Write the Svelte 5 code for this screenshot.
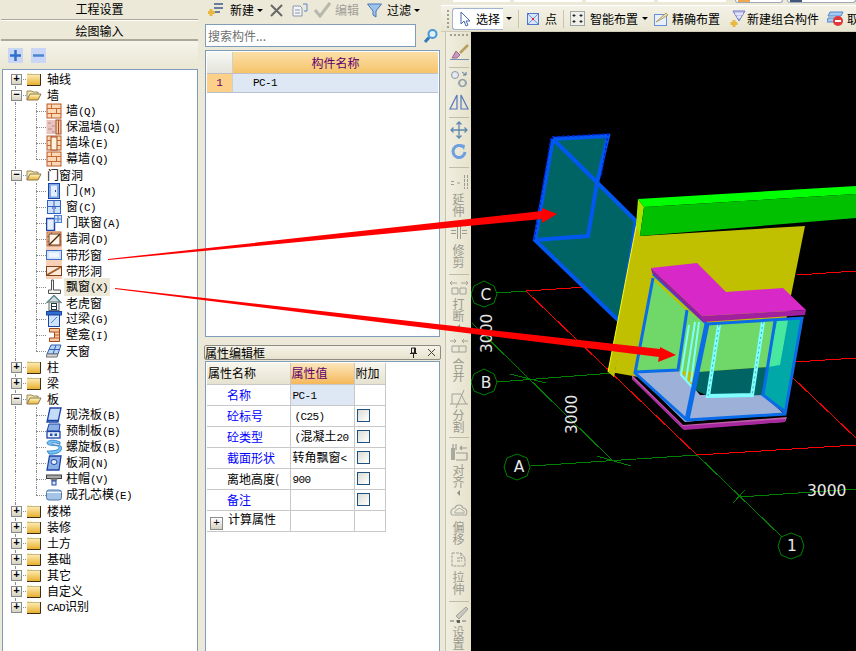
<script>
	const tree = [
		{ n: '轴线' },
		{ n: '墙', kids: [['墙(Q)', 'wall'], ['保温墙(Q)', 'insul'], ['墙垛(E)', 'pier'], ['幕墙(Q)', 'wall']] },
		{
			n: '门窗洞',
			kids: [
				['门(M)', 'door'], ['窗(C)', 'win'], ['门联窗(A)', 'doorwin'], ['墙洞(D)', 'hole'],
				['带形窗', 'band'], ['带形洞', 'bandhole'], ['飘窗(X)', 'bay'], ['老虎窗', 'dormer'],
				['过梁(G)', 'lintel'], ['壁龛(I)', 'niche'], ['天窗', 'sky']
			]
		},
		{ n: '柱' },
		{ n: '梁' },
		{
			n: '板',
			kids: [
				['现浇板(B)', 'slab'], ['预制板(B)', 'precast'], ['螺旋板(B)', 'spiral'],
				['板洞(N)', 'slabhole'], ['柱帽(V)', 'cap'], ['成孔芯模(E)', 'core']
			]
		},
		{ n: '楼梯' }, { n: '装修' }, { n: '土方' }, { n: '基础' }, { n: '其它' }, { n: '自定义' }, { n: 'CAD识别' }
	];

	const rows = [
		{ name: '名称', val: 'PC-1', blue: true, sel: true },
		{ name: '砼标号', val: '(C25)', blue: true, check: true, pad: true },
		{ name: '砼类型', val: '(混凝土20', blue: true, check: true, pad: true },
		{ name: '截面形状', val: '转角飘窗<', blue: true, check: true },
		{ name: '离地高度(', val: '900', check: true },
		{ name: '备注', val: '', blue: true, check: true }
	];

	const tools = [
		{ icon: 'brush', h: 28, pt: 4, sep: true },
		{ icon: 'circles', h: 23 },
		{ icon: 'mirror', h: 24, sep: true },
		{ icon: 'move', h: 23, pt: 1 },
		{ icon: 'rotate', h: 24, sep: true },
		{ icon: 'extend', t: '延伸', h: 55, pt: 3, mt: 1 },
		{ icon: 'trim', t: '修剪', h: 49, mt: 0, sep: true },
		{ icon: 'break', t: '打断', h: 59, pt: 1, mt: 1, more: true },
		{ icon: 'merge', t: '合并', h: 54, mt: 3 },
		{ icon: 'split', t: '分割', h: 47, mt: 0, sep: true },
		{ icon: 'align', t: '对齐', h: 61, pt: 3, mt: 2, more: true },
		{ icon: 'offset', t: '偏移', h: 50, mt: 1 },
		{ icon: 'stretch', t: '拉伸', h: 50, mt: 1, sep: true },
		{ icon: 'setup', t: '设置', h: 50, pt: 2, mt: 1 }
	];

	const parts = (s) => s.split(/([\x00-\x7f]+)/).filter(Boolean);
</script>

{#snippet label(text)}
	{#each parts(text) as p}
		{#if /^[\x00-\x7f]/.test(p)}<span class="lat">{p}</span>{:else}{p}{/if}
	{/each}
{/snippet}

{#snippet folder(open)}
	<svg class="ico" width="16" height="14" viewBox="0 0 16 14">
		<defs>
			<linearGradient id="fold" x1="0" y1="0" x2="0" y2="1">
				<stop offset="0" stop-color="#fff6c8" /><stop offset="1" stop-color="#e8b030" />
			</linearGradient>
		</defs>
		{#if open}
			<path d="M1 3h5l1 1h5v3H4L1 12z" fill="#f4e4a8" stroke="#9a8a60" />
			<path d="M1 12l3-6h11l-3 6z" fill="url(#fold)" stroke="#8a7a50" />
		{:else}
			<path d="M1 2l1-1h4l1 1h7v11H1z" fill="url(#fold)" />
			<path d="M14.500 2v11.500H1" fill="none" stroke="#3a3018" />
			<path d="M1 2.500h13" stroke="#c8b880" />
		{/if}
	</svg>
{/snippet}

{#snippet brick()}
	<rect x="1" y="1" width="14" height="14" fill="#fbd9b8" stroke="#b85a28" />
	<path d="M1 5.500h14M1 10.500h14M5.500 1v4.500M10.500 5.500v5M5.500 10.500v4.500" stroke="#c86a30" fill="none" />
{/snippet}

{#snippet treeIcon(kind)}
	<svg class="ico" width="16" height="16" viewBox="0 0 16 16">
		{#if kind === 'wall'}
			{@render brick()}
		{:else if kind === 'insul'}
			<rect x="0.500" y="1" width="10" height="14" fill="#e8c4c0" />
			<path d="M2 4h3M6 7h3M2 10h4M6 13h3" stroke="#c08880" />
			<rect x="10" y="1" width="5" height="14" fill="#f4c8a0" stroke="#a85028" />
			<path d="M12.500 1v14" stroke="#a85028" />
		{:else if kind === 'pier'}
			{@render brick()}
			<rect x="5" y="2" width="6" height="13" fill="#fff0dc" stroke="#a04818" />
		{:else if kind === 'door'}
			<rect x="2.500" y="0.500" width="11" height="15" fill="#7fa8e4" stroke="#1c44a8" />
			<rect x="5" y="2.500" width="6" height="11" fill="#e4eefc" />
			<rect x="9" y="7" width="1" height="2" fill="#1c44a8" />
		{:else if kind === 'win'}
			<rect x="1.500" y="1.500" width="13" height="13" fill="#cfe2fa" stroke="#3060c0" />
			<path d="M8 1.500v13M1.500 7.500h13" stroke="#3060c0" />
			<path d="M6 9h1M9 9h1" stroke="#103080" />
		{:else if kind === 'doorwin'}
			<rect x="0.500" y="3.500" width="8" height="12" fill="#e4eefc" stroke="#1c44a8" stroke-width="1.500" />
			<rect x="8.500" y="0.500" width="7" height="7" fill="#cfe2fa" stroke="#5080d0" />
			<path d="M12 0.500v7M8.500 4h7" stroke="#5080d0" />
		{:else if kind === 'hole'}
			{@render brick()}
			<rect x="3" y="3" width="11" height="11" fill="#fff4e8" stroke="#703818" />
			<path d="M3 14L14 3" stroke="#502810" stroke-width="1.500" />
		{:else if kind === 'band'}
			<rect x="0" y="0" width="16" height="16" fill="#f8d0b8" />
			<rect x="0.500" y="3.500" width="15" height="9" fill="#cfe0f8" stroke="#4070c8" />
			<rect x="3" y="5.500" width="10" height="5" fill="#f0f6ff" />
		{:else if kind === 'bandhole'}
			<rect x="0" y="0" width="16" height="16" fill="#f8d0b8" />
			<rect x="0.500" y="3.500" width="15" height="9" fill="#fbe8d8" stroke="#804018" />
			<path d="M1 12L15 4" stroke="#a06030" stroke-width="2" />
		{:else if kind === 'bay'}
			<path d="M5.500 1v10H2.500v3.500h12V11H7.500V1z" fill="#f4f4f0" stroke="#505050" />
		{:else if kind === 'dormer'}
			<path d="M0.500 8L8 0.500 15.500 8" fill="#cfe0e8" stroke="#608890" stroke-width="1.500" />
			<rect x="3" y="7" width="10" height="8.500" fill="#f4f4e8" stroke="#606860" />
			<rect x="5.500" y="8.500" width="5" height="6" fill="#fff" stroke="#203850" />
			<path d="M5.500 11.500h5" stroke="#203850" />
		{:else if kind === 'lintel'}
			<rect x="0.500" y="0.500" width="15" height="3.500" fill="#3070d0" stroke="#1c44a8" />
			<rect x="2.500" y="4" width="11" height="11.500" fill="#cfe4fa" stroke="#1c44a8" />
			<path d="M5 12L11 6" stroke="#5080c0" />
		{:else if kind === 'niche'}
			<path d="M3.500 1.500h10v13h-10v-3.500h5v-6h-5z" fill="#f4c8a0" stroke="#a04818" />
			<path d="M9 5h4M9 8h4M9 11h4" stroke="#b86030" />
		{:else if kind === 'sky'}
			<path d="M5 2h10l-3 9H1z" fill="#bcd4f4" stroke="#3060b0" />
			<path d="M10 2L7 11M3 6.500h11" stroke="#3060b0" />
			<path d="M1 11h11l-1 3H0z" fill="#d8d8d8" stroke="#707070" />
		{:else if kind === 'slab'}
			<path d="M4 1h11l-3 14H1z" fill="#c4dcf8" stroke="#1c44a8" stroke-width="1.300" />
			<path d="M1 13.500h11" stroke="#1c44a8" stroke-width="1.500" />
		{:else if kind === 'precast'}
			<path d="M3 1h11l-1 7H1z" fill="#8cb0e4" stroke="#1c44a8" />
			<rect x="1" y="8.500" width="13" height="6.500" fill="#e8f0fc" stroke="#1c44a8" stroke-width="1.300" />
			<rect x="4" y="10.500" width="2.500" height="2.500" fill="#2050b0" />
			<rect x="8.500" y="10.500" width="2.500" height="2.500" fill="#2050b0" />
		{:else if kind === 'spiral'}
			<path d="M14 3C8 0 1 1 1 4c0 4 12 1 12 4.500S4 12 1 12l2 3c6 1 13-2 13-6 0-4-10-2-10-4.500 0-1 5-1 8 1z" fill="#70c0f0" stroke="#2878c8" stroke-width="0.800" />
		{:else if kind === 'slabhole'}
			<path d="M3.500 1h11.500l-2 14H1z" fill="#8cb0e4" stroke="#1c44a8" stroke-width="1.300" />
			<ellipse cx="8" cy="7" rx="3" ry="2.500" fill="#e8f0fc" stroke="#1c44a8" />
		{:else if kind === 'cap'}
			<rect x="0.500" y="4" width="15" height="3.500" fill="#a8a8a8" stroke="#404040" />
			<path d="M4 7.500h8L10.500 10h-5z" fill="#808080" />
			<rect x="6" y="10" width="4" height="4" fill="#dce8f8" stroke="#1c44a8" />
		{:else if kind === 'core'}
			<rect x="0.500" y="3" width="15" height="10" rx="2.500" fill="#a4c4e8" stroke="#5078a8" />
			<path d="M1 5.500h14" stroke="#f0f6ff" />
		{/if}
	</svg>
{/snippet}

{#snippet toolIcon(kind)}
	<svg class="ico" width="22" height="20" viewBox="0 0 22 20" fill="none" stroke="#9a9c94">
		{#if kind === 'brush'}
			<path d="M12 11L20 3" stroke="#b8a060" stroke-width="2.500" />
			<path d="M8 9l4 4-3 3H4z" fill="#c898c0" stroke="#a06890" />
			<path d="M2 17.500h19" stroke="#7890b0" />
		{:else if kind === 'circles'}
			<circle cx="7" cy="6" r="3.500" stroke="#8898a8" fill="#e8e8f0" />
			<circle cx="15" cy="14" r="3.500" stroke="#8898a8" />
			<circle cx="14" cy="14" r="3.500" stroke="#8898a8" />
			<path d="M14 3l4 3M18 3v3h-3" stroke="#5878a0" />
		{:else if kind === 'mirror'}
			<path d="M9 3L2 17h7zM13 3l7 14h-7z" stroke="#5878b8" stroke-width="1.200" />
		{:else if kind === 'move'}
			<path d="M11 2v16M3 10h16M8.500 4.500L11 2l2.500 2.500M8.500 15.500L11 18l2.500-2.500M5.500 7.500L3 10l2.500 2.500M16.500 7.500L19 10l-2.500 2.500" stroke="#6088b0" stroke-width="1.300" />
		{:else if kind === 'rotate'}
			<path d="M15 5a6 6 0 1 0 2 5" stroke="#6ca0e0" stroke-width="3" />
			<path d="M12 2l5 1-1 5z" fill="#6ca0e0" stroke="none" />
		{:else if kind === 'extend'}
			<path d="M3 9.500h4M3 12.500h4M9 11h4M16.500 3v14M19.500 3v14" stroke-dasharray="3 1" />
		{:else if kind === 'trim'}
			<path d="M3 6.500h5M14 6.500h5M3 9.500h5M14 9.500h5M9.500 1v14M12.500 1v14" />
		{:else if kind === 'break'}
			<path d="M2 6h7M13 6h7M4 4L2 6l2 2M18 4l2 2-2 2M4 11h6v6H4zM12 11h6v6h-6z" stroke="#a0a298" />
		{:else if kind === 'merge'}
			<path d="M2 6h6M14 6h6M6 4l2 2-2 2M16 4l-2 2 2 2M4 11h14v6H4zM11 11v6" stroke="#a0a298" />
		{:else if kind === 'split'}
			<path d="M2 15h18M4 5h9L18 15M16 1L8 19M4 5v10" stroke="#a0a298" />
		{:else if kind === 'align'}
			<path d="M5 2v16M8 8V2M8 18h11M12 6h7M12 6l2-2M12 6l2 2M8 11h11v7" stroke-width="1.200" />
			<rect x="3" y="6" width="4" height="12" fill="#a8aaa0" stroke="none" />
		{:else if kind === 'offset'}
			<path d="M4 15c-3-4 1-7 3-7 1-4 7-4 8 0 3 0 5 3 3 7z" stroke="#a8aaa0" stroke-width="1.200" />
			<path d="M7 13c-1-2 1-3 2-3 1-2 4-2 5 0 1 0 3 1 2 3z" stroke="#a8aaa0" />
		{:else if kind === 'stretch'}
			<path d="M4 3h9l4 5v8H4zM13 3v5h4M9 8h5M9 11h5" stroke-dasharray="3 1" />
		{:else if kind === 'setup'}
			<path d="M8 11L18 2l2 2-9 10z" fill="#c8c8c0" stroke="#a0a298" />
			<path d="M2 16h18" stroke="#70706c" stroke-dasharray="4 2" />
			<rect x="9" y="15" width="3" height="3" fill="#606060" stroke="none" />
		{/if}
	</svg>
{/snippet}

<div class="app">
	<aside class="left">
		<div class="tab">工程设置</div>
		<div class="tab second">绘图输入</div>
		<div class="treebar">
			<svg width="15" height="15" viewBox="0 0 15 15"><rect width="15" height="15" fill="#c9d6f6" /><path d="M2 7.500h11M7.500 2v11" stroke="#2f70c8" stroke-width="2.500" /></svg>
			<svg width="15" height="15" viewBox="0 0 15 15"><rect width="15" height="15" fill="#c9d6f6" /><path d="M2 7.500h11" stroke="#4a86cc" stroke-width="2.500" /></svg>
		</div>
		<div class="tree">
			{#each tree as g, i}
				<div class="row">
					<span class="vl" class:first={i === 0} class:last={i === tree.length - 1}></span>
					<span class="hl"></span>
					<span class="box">{g.kids ? '−' : '+'}</span>
					{@render folder(!!g.kids)}
					<span class="txt">{@render label(g.n)}</span>
				</div>
				{#if g.kids}
					{#each g.kids as k, j}
						<div class="row child">
							<span class="vl"></span>
							<span class="vl2" class:last={j === g.kids.length - 1}></span>
							<span class="hl2"></span>
							{@render treeIcon(k[1])}
							<span class="txt" class:picked={k[1] === 'bay'}>{@render label(k[0])}</span>
						</div>
					{/each}
				{/if}
			{/each}
		</div>
	</aside>

	<section class="mid">
		<div class="bar">
			<svg class="ico" width="16" height="16" viewBox="0 0 16 16"><path d="M6 2h9M6 6h9M6 10h6" stroke="#3c5c90" stroke-width="1.300" /><path d="M3 7v7M0 10.500h7" stroke="#e8b840" stroke-width="3" /></svg>
			<span class="m6">新建</span><i class="caret"></i>
			<svg class="m6 ico" width="15" height="15" viewBox="0 0 15 15"><path d="M2 2l11 11M13 2L2 13" stroke="#686868" stroke-width="2" /></svg>
			<svg class="m8 ico" width="16" height="16" viewBox="0 0 16 16" fill="none"><path d="M1 4h7l2 2v8H1z" fill="#f4f4f4" stroke="#8898b0" /><path d="M3 8h5M3 11h5" stroke="#8898b0" /><path d="M11 2h4v7h-3" stroke="#5888c8" /></svg>
			<svg class="m6 ico" width="17" height="16" viewBox="0 0 17 16" fill="none"><path d="M1 8l5 6L16 1" stroke="#b8b8ac" stroke-width="3" /></svg>
			<span class="off">编辑</span>
			<svg class="m8 ico" width="15" height="15" viewBox="0 0 15 15"><path d="M0.500 1h14L9 8v6l-3-2V8z" fill="#9cc4ec" stroke="#4878b8" /></svg>
			<span class="m5">过滤</span><i class="caret"></i>
		</div>
		<div class="search">
			<div class="input">搜索构件...</div>
			<svg class="ico" width="16" height="16" viewBox="0 0 16 16" fill="none"><circle cx="9.500" cy="6" r="4" fill="#dff0fc" stroke="#4898d8" stroke-width="2" /><path d="M6 9.500L2 14" stroke="#3078b8" stroke-width="3" /></svg>
		</div>
		<div class="list">
			<div class="lhead"><span class="corner"></span><span class="lname">构件名称</span></div>
			<div class="lrow"><span class="num">1</span><span class="cell">PC-1</span></div>
		</div>
		<div class="ptitle">
			<span class="ptext">属性编辑框</span>
			<svg width="9" height="11" viewBox="0 0 9 11"><path d="M2.500 1h4v5h-4zM1 6.500h7M4.500 7v4M5.500 1v5" stroke="#202020" fill="none" /></svg>
			<svg width="9" height="9" viewBox="0 0 9 9"><path d="M1 1l7 7M8 1L1 8" stroke="#404040" /></svg>
		</div>
		<div class="props">
			<table>
				<thead>
					<tr><th class="hname">属性名称</th><th class="hval">属性值</th><th class="hadd">附加</th></tr>
				</thead>
				<tbody>
					{#each rows as r}
						<tr>
							<td class="name" class:blue={r.blue}>{r.name}</td>
							<td class="val" class:sel={r.sel} class:pad={r.pad}>{@render label(r.val)}</td>
							<td class="add">{#if r.check}<span class="chk"></span>{/if}</td>
						</tr>
					{/each}
					<tr>
						<td class="calc"><span class="box big">+</span>计算属性</td><td></td><td></td>
					</tr>
				</tbody>
			</table>
		</div>
	</section>

	<section class="main">
		<div class="strip">
			<span class="blk b1"></span><span class="blk"></span><span class="blk"></span><span class="blk"></span>
			<span class="ftab f1"><i></i></span>
			<span class="ftab f2"><i></i></span>
		</div>
		<div class="tools">
			<span class="grip"></span>
			<div class="select">
				<svg class="ico" width="12" height="16" viewBox="0 0 12 16"><path d="M2 1v12l3-3 2 5 2-1-2-4h4z" fill="#fff" stroke="#4868a8" /></svg>
				<span>选择</span>
			</div>
			<i class="caret k1"></i><b class="tsep"></b>
			<svg class="ico" width="12" height="12" viewBox="0 0 12 12" fill="none"><rect x="0.500" y="0.500" width="11" height="11" fill="#d8e4fa" stroke="#5078c8" /><path d="M1 1l10 10M11 1L1 11" stroke="#7098d8" /><circle cx="6" cy="6" r="1.200" fill="#e03030" /></svg>
			<span class="t1">点</span><b class="tsep t2"></b>
			<svg class="ico" width="15" height="15" viewBox="0 0 15 15" fill="none"><rect x="0.500" y="0.500" width="14" height="14" fill="#f0f0e8" stroke="#506070" stroke-dasharray="1 1" /><path d="M4 3v3M2.500 4.500h3M11 3v3M9.500 4.500h3M4 9v3M2.500 10.500h3M11 9v3M9.500 10.500h3" stroke="#202830" /></svg>
			<span class="t3">智能布置</span><i class="caret k2"></i>
			<svg class="t4 ico" width="14" height="14" viewBox="0 0 14 14" fill="none"><rect x="0.500" y="2.500" width="12" height="11" fill="#e8f0fc" stroke="#6890d8" /><path d="M2 10L12 1l2 2-8 5z" fill="#e8dcb0" stroke="#b0a070" /></svg>
			<span class="t5">精确布置</span>
			<svg class="t6 ico" width="16" height="18" viewBox="0 0 16 18" fill="none"><path d="M3 1h12L9 11z" fill="#c4c8f0" stroke="#7078c0" /><path d="M5 4h8M7 7h4" stroke="#fff" /><path d="M4 10v7M0.500 13.500h7" stroke="#e8b840" stroke-width="3" /></svg>
			<span class="t7">新建组合构件</span>
			<svg class="t8 ico" width="17" height="17" viewBox="0 0 17 17" fill="none"><path d="M3 2h13l-2 4H1zM1 8h10l-1 4H0z" fill="#a8c8f0" stroke="#5088d0" /><circle cx="11" cy="11" r="5" fill="#e03838" /><path d="M8 11h6" stroke="#fff" stroke-width="2" /></svg>
			<span class="t9">取</span>
		</div>
		<div class="work">
			<div class="vtool">
				<span class="vgrip"></span>
				{#each tools as t}
					<div class="tool" style="height:{t.h}px;padding-top:{t.pt ?? 0}px">
						{@render toolIcon(t.icon)}
						{#if t.t}<span class="vt" style="margin-top:{t.mt}px">{t.t}</span>{/if}
						{#if t.more}<i class="vmore"></i>{/if}
					</div>
					{#if t.sep}<b class="vsep"></b>{/if}
				{/each}
			</div>
			<svg class="scene" width="385" height="619" viewBox="471 32 385 619">
				<rect x="471" y="32" width="385" height="619" fill="#000" />
				<g fill="none" stroke-width="1" shape-rendering="crispEdges">
					<g stroke="#ff0000">
						<path d="M526 291L586 287M797 275L856 271M795 362L856 358M697 455L856 445" />
						<path d="M526 291L697 455M792 377L856 438" />
					</g>
					<g stroke="#008000">
						<path d="M496 293L526 291M497 382L613 373M531 466L697 455M740 497L856 489" />
						<path d="M472 323L612 460M697 455L782 537" />
						<path d="M510 374L546 383M597 456L631 466M733 503L745 490" />
					</g>
				</g>
				<g fill="none" stroke="#008000">
					<polygon points="484,281 494,286 497,294 494,303 484,307 474,303 471,294 474,286" />
					<polygon points="484,369 494,374 497,382 494,391 484,395 474,391 471,382 474,374" />
					<polygon points="517,454 527,458 530,467 527,476 517,480 507,476 504,467 507,458" />
					<polygon points="791,533 801,537 804,546 801,555 791,559 781,555 778,546 781,537" />
				</g>
				<g fill="#e8e8e8" font-family="'DejaVu Sans', sans-serif" font-size="15.500">
					<text x="486" y="300" text-anchor="middle">C</text>
					<text x="486" y="388" text-anchor="middle">B</text>
					<text x="519" y="472" text-anchor="middle">A</text>
					<text x="792" y="551" text-anchor="middle">1</text>
					<text x="807" y="496">3000</text>
					<text transform="translate(492 353) rotate(-90)">3000</text>
					<text transform="translate(577 434) rotate(-90)">3000</text>
				</g>

				<!-- free standing band window -->
				<polygon points="553,139 608,136 597,183 637,220 620,322 535,240" fill="#006464" />
				<g fill="none" stroke="#0058f0" stroke-width="4">
					<path d="M553,139L608,136L597,183M553,139L636,221L620,322L535,240L553,139M597,183L588,236L535,240" />
				</g>
				<path d="M552,137L608,134L601,178M551,138L534,240M620,324L638,222" fill="none" stroke="#0020d8" stroke-width="1.500" stroke-dasharray="3 2" />

				<!-- wall and beam -->
				<polygon points="637,222 640,236 805,226 770,400 610,372 614,377" fill="#c0c000" />
				<polygon points="637,222 608,372 614,377 640,236" fill="#c0c000" />
				<path d="M637,222L608,372" stroke="#ffff00" fill="none" />
				<polygon points="638,199 644,207 640,236 636,225" fill="#a8e000" />
				<polygon points="638,199 856,186 856,194 644,207" fill="#00ff00" />
				<polygon points="644,207 856,194 856,218 640,236" fill="#00c000" />

				<!-- bay window -->
				<polygon points="632,375 683,425 787,417 785,422 683,429 632,379" fill="#c060a8" />
				<polygon points="683,426 785,419 785,422 684,430 632,379 632,377" fill="#a828a0" />
				<polygon points="635,373 680,371 700,395 763,395 783,413 685,422" fill="#9cb0d8" />
				<polygon points="653,280 686,310 678,370 637,372" fill="#70d868" />
				<polygon points="687,310 707,325 698,372 680,371" fill="#70d868" />
				<polygon points="707,325 775,321 768,367 698,372" fill="#70d868" />
				<polygon points="698,372 768,367 763,395 710,397 695,390" fill="#006464" />
				<polygon points="775,321 802,318 785,410 763,395" fill="#00a8a8" />
				<polygon points="777,321 788,320 780,365 768,367" fill="#48e8a0" />
				<g fill="none" stroke="#80ffff" stroke-width="4">
					<path d="M719,325L708,396L752,395L763,322" />
				</g>
				<g fill="none" stroke="#80ffff" stroke-width="2">
					<path d="M689,325L681,375L693,388M695,322L686,380M699,322L691,382" />
				</g>
				<path d="M719,325L708,396M763,322L752,395" fill="none" stroke="#30b0b0" stroke-dasharray="2 3" />
				<g fill="none" stroke="#0a6ce8" stroke-width="3">
					<path d="M653,278L635,373L687,420L785,414L802,318L707,324L653,274" />
					<path d="M707,324L687,420" stroke-width="5" />
					<path d="M635,372L678,370L687,310M775,321L763,395L785,412" />
				</g>
				<polygon points="651,268 697,263 726,292 783,288 806,310 702,316" fill="#d828c8" />
				<polygon points="651,268 702,316 703,322 652,273" fill="#9020a0" />
				<polygon points="702,316 806,310 805,315 703,322" fill="#a020a0" />
			</svg>
		</div>
	</section>

	<svg class="arrows" width="856" height="651" viewBox="0 0 856 651">
		<polygon points="108,259 542,211 542,208 557,214 542,223 542,219 108,260" fill="#f00" />
		<polygon points="115,288 660,349 660,347 676,355 658,362 659,357 115,289" fill="#f00" />
	</svg>
</div>

<style>
	:global(body) {
		margin: 0;
	}
	.app {
		position: relative;
		display: flex;
		width: 856px;
		height: 651px;
		overflow: hidden;
		background: #ece9d8;
		color: #000;
		font: 12px/16px 'Noto Sans CJK SC', sans-serif;
	}
	.ico {
		flex: none;
		display: block;
	}
	.lat {
		font-family: 'Liberation Mono', monospace;
		font-size: 11px;
		letter-spacing: -0.6px;
	}

	/* left column */
	.left {
		flex: none;
		width: 204px;
		box-sizing: border-box;
		padding-right: 6px;
		display: flex;
		flex-direction: column;
	}
	.tab {
		height: 19px;
		margin-left: 1px;
		text-align: center;
		line-height: 18px;
		border-bottom: 1px solid #aca899;
		background: #ece9d8;
	}
	.second {
		height: 18px;
		line-height: 20px;
		border-top: 1px solid #fff;
		border-bottom: 2px solid #aca899;
	}
	.treebar {
		height: 28px;
		flex: none;
		display: flex;
		align-items: center;
		gap: 8px;
		padding-left: 8px;
		background: linear-gradient(#f6f4ea, #e9e6d4);
	}
	.tree {
		flex: 1;
		margin-left: 2px;
		padding-top: 1px;
		background: #fff;
		border: 1px solid #7f9db9;
		border-bottom: 0;
	}
	.row {
		position: relative;
		display: flex;
		align-items: center;
		height: 16px;
		padding-left: 23px;
	}
	.child {
		padding-left: 43px;
	}
	.vl,
	.vl2 {
		position: absolute;
		left: 12px;
		top: 0;
		height: 16px;
		border-left: 1px dotted #909090;
	}
	.vl.first {
		top: 8px;
		height: 8px;
	}
	.vl.last,
	.vl2.last {
		height: 8px;
	}
	.vl2 {
		left: 33px;
	}
	.hl,
	.hl2 {
		position: absolute;
		left: 12px;
		top: 8px;
		width: 11px;
		border-top: 1px dotted #909090;
	}
	.hl2 {
		left: 33px;
		width: 10px;
	}
	.box {
		position: absolute;
		left: 8px;
		top: 3px;
		width: 9px;
		height: 9px;
		box-sizing: content-box;
		border: 1px solid #8a8a8a;
		background: linear-gradient(#fff, #d4d0c0);
		font: bold 11px/9px 'Liberation Mono', monospace;
		text-align: center;
	}
	.box.big {
		position: static;
		display: inline-block;
		width: 11px;
		height: 11px;
		margin: 0 5px 0 3px;
		line-height: 11px;
		font-weight: normal;
		vertical-align: -2px;
	}
	.txt {
		margin-left: 5px;
		white-space: nowrap;
	}
	.child .txt {
		margin-left: 2px;
		padding: 0 2px;
	}
	.picked {
		background: #ece9d8;
	}

	/* middle column */
	.mid {
		flex: none;
		width: 237px;
		display: flex;
		flex-direction: column;
		min-height: 0;
	}
	.bar {
		height: 20px;
		flex: none;
		display: flex;
		align-items: center;
		padding-left: 4px;
		white-space: nowrap;
	}
	.m6 {
		margin-left: 6px;
	}
	.m5 {
		margin-left: 5px;
	}
	.m8 {
		margin-left: 8px;
	}
	.off {
		margin-left: 4px;
		color: #a0a098;
	}
	.caret {
		flex: none;
		display: block;
		width: 0;
		height: 0;
		margin-left: 3px;
		border: 3px solid transparent;
		border-top: 3px solid #000;
		border-bottom: 0;
	}
	.search {
		height: 23px;
		flex: none;
		margin-top: 4px;
		display: flex;
		align-items: center;
		gap: 3px;
		padding-left: 1px;
	}
	.input {
		width: 207px;
		height: 21px;
		line-height: 21px;
		padding-left: 2px;
		background: #fff;
		border: 1px solid #7f9db9;
		color: #707070;
	}
	.search .ico {
		margin-left: 4px;
	}
	.list {
		height: 287px;
		flex: none;
		margin: 3px 1px 0;
		box-sizing: border-box;
		padding: 1px;
		background: #fff;
		border: 1px solid #7f9db9;
	}
	.lhead {
		display: flex;
		height: 21px;
		line-height: 21px;
	}
	.corner {
		width: 25px;
		background: linear-gradient(#f8f8f4, #e4e4dc);
		border-right: 1px solid #d0d0c8;
	}
	.lname {
		width: 205px;
		text-align: center;
		color: #5c0070;
		background: linear-gradient(#fbdfa8, #f6c46a);
	}
	.lrow {
		display: flex;
		height: 18px;
		line-height: 18px;
		border-top: 1px solid #c0c0c8;
		border-bottom: 1px solid #b8c0cc;
	}
	.num {
		width: 25px;
		text-align: center;
		background: #fdd08a;
		color: #5c0070;
		font: 11px/18px 'Liberation Mono', monospace;
		border-right: 1px solid #d0d0c8;
	}
	.cell {
		width: 205px;
		padding-left: 20px;
		box-sizing: border-box;
		background: #dee8f5;
		font: 11px/18px 'Liberation Mono', monospace;
		letter-spacing: -0.6px;
	}
	.ptitle {
		height: 13px;
		flex: none;
		margin-top: 8px;
		display: flex;
		align-items: center;
		justify-content: flex-end;
		gap: 9px;
		padding-right: 4px;
		border: 1px solid #8c8c84;
		border-radius: 2px;
		background: linear-gradient(#f6f4ea, #e6e2cc);
	}
	.ptext {
		margin-right: auto;
		line-height: 13px;
	}
	.props {
		flex: 1;
		margin: 1px 1px 0;
		padding: 1px 0 0 1px;
		background: #fff;
		border: 1px solid #7f9db9;
		border-bottom: 0;
	}
	table {
		border-collapse: collapse;
		table-layout: fixed;
		width: 178px;
	}
	th {
		height: 21px;
		padding: 0 1px;
		font-weight: normal;
		text-align: left;
		background: linear-gradient(#f8f6ec, #e6e2d0);
		border-right: 1px solid #c8c8c8;
		border-bottom: 1px solid #c8c8c8;
		box-sizing: border-box;
	}
	.hname {
		width: 83px;
	}
	.hval {
		width: 64px;
		color: #5c0070;
		background: linear-gradient(#fbe6bc, #f5b85a);
	}
	.hadd {
		width: 31px;
	}
	td {
		height: 21px;
		padding: 0;
		box-sizing: border-box;
		border: 1px solid #c8c8c8;
		border-top: 0;
		border-left: 0;
		overflow: hidden;
		white-space: nowrap;
	}
	.name {
		padding-left: 20px;
	}
	.blue {
		color: #0000ff;
	}
	.val {
		padding-left: 2px;
	}
	.pad {
		padding-left: 4px;
	}
	.sel {
		background: #dee8f5;
	}
	.add {
		padding-left: 2px;
	}
	.chk {
		display: block;
		width: 11px;
		height: 11px;
		border: 1px solid #1c5180;
		background: linear-gradient(135deg, #dcdcd4, #fff);
	}
	.calc {
		padding-left: 0;
	}

	/* main area */
	.main {
		flex: none;
		width: 415px;
		display: flex;
		flex-direction: column;
		min-width: 0;
	}
	.strip {
		height: 6px;
		flex: none;
		display: flex;
		gap: 4px;
		align-items: flex-start;
		border-bottom: 1px solid #fff;
		box-sizing: border-box;
	}
	.blk {
		flex: none;
		width: 68px;
		height: 2px;
		background: #fff;
	}
	.b1 {
		width: 57px;
		margin-left: 12px;
	}
	.ftab {
		flex: none;
		height: 3px;
		box-sizing: border-box;
		background: #fff;
		border: 1px solid #a0a8b8;
		border-top: 0;
		border-radius: 0 0 3px 3px;
	}
	.ftab i {
		display: block;
		width: 12px;
		height: 2px;
		margin-left: 2px;
		background: #f0a850;
	}
	.f1 {
		width: 48px;
		margin-left: 5px;
	}
	.f2 {
		width: 69px;
	}
	.f2 i {
		background: #405878;
	}
	.tools {
		flex: none;
		height: 26px;
		box-sizing: border-box;
		display: flex;
		align-items: center;
		white-space: nowrap;
		overflow: hidden;
		background: linear-gradient(#f4f2e6, #e8e5d2);
		border-bottom: 1px solid #d0ccb8;
	}
	.grip {
		flex: none;
		width: 0;
		height: 18px;
		margin: 0 3px 0 6px;
		border-left: 2px dotted #a0a090;
	}
	.select {
		flex: none;
		display: flex;
		align-items: center;
		gap: 5px;
		width: 51px;
		height: 22px;
		box-sizing: border-box;
		padding-left: 6px;
		background: #fff;
		border: 1px solid #a4b4d0;
		border-right: 0;
		border-radius: 3px 0 0 3px;
	}
	.tools .caret.k1 {
		margin-left: 3px;
	}
	.tsep {
		flex: none;
		width: 1px;
		height: 18px;
		margin: 0 8px 0 6px;
		background: #c8c4b0;
	}
	.t1 {
		margin-left: 6px;
	}
	.tools .tsep.t2 {
		margin: 0 6px 0 6px;
	}
	.t3 {
		margin-left: 5px;
	}
	.tools .caret.k2 {
		margin-left: 4px;
	}
	.t4 {
		margin-left: 6px;
	}
	.t5 {
		margin-left: 4px;
	}
	.t6 {
		margin-left: 10px;
	}
	.t7 {
		margin-left: 1px;
	}
	.t8 {
		margin-left: 8px;
	}
	.t9 {
		margin-left: 3px;
	}
	.work {
		flex: 1;
		display: flex;
		min-height: 0;
	}
	.vtool {
		flex: none;
		width: 26px;
		margin-left: 4px;
		display: flex;
		flex-direction: column;
		align-items: center;
		overflow: hidden;
		background: linear-gradient(90deg, #f0eee0, #e6e2cc);
		border-left: 1px solid #c8c4b0;
		box-sizing: border-box;
	}
	.vgrip {
		flex: none;
		width: 18px;
		height: 2px;
		margin-top: 2px;
		border-top: 2px dotted #a0a090;
	}
	.tool {
		flex: none;
		box-sizing: border-box;
		display: flex;
		flex-direction: column;
		align-items: center;
	}
	.vt {
		display: block;
		width: 12px;
		line-height: 12px;
		color: #9a9a8e;
		text-align: center;
	}
	.vmore {
		display: block;
		width: 0;
		height: 0;
		margin-top: 2px;
		border: 3px solid transparent;
		border-right: 3px solid #909088;
		border-left: 0;
	}
	.vsep {
		flex: none;
		width: 20px;
		height: 1px;
		margin: 1px 0;
		background: #c0bca8;
	}
	.scene {
		flex: none;
		display: block;
	}
	.arrows {
		position: absolute;
		left: 0;
		top: 0;
		pointer-events: none;
	}
</style>
